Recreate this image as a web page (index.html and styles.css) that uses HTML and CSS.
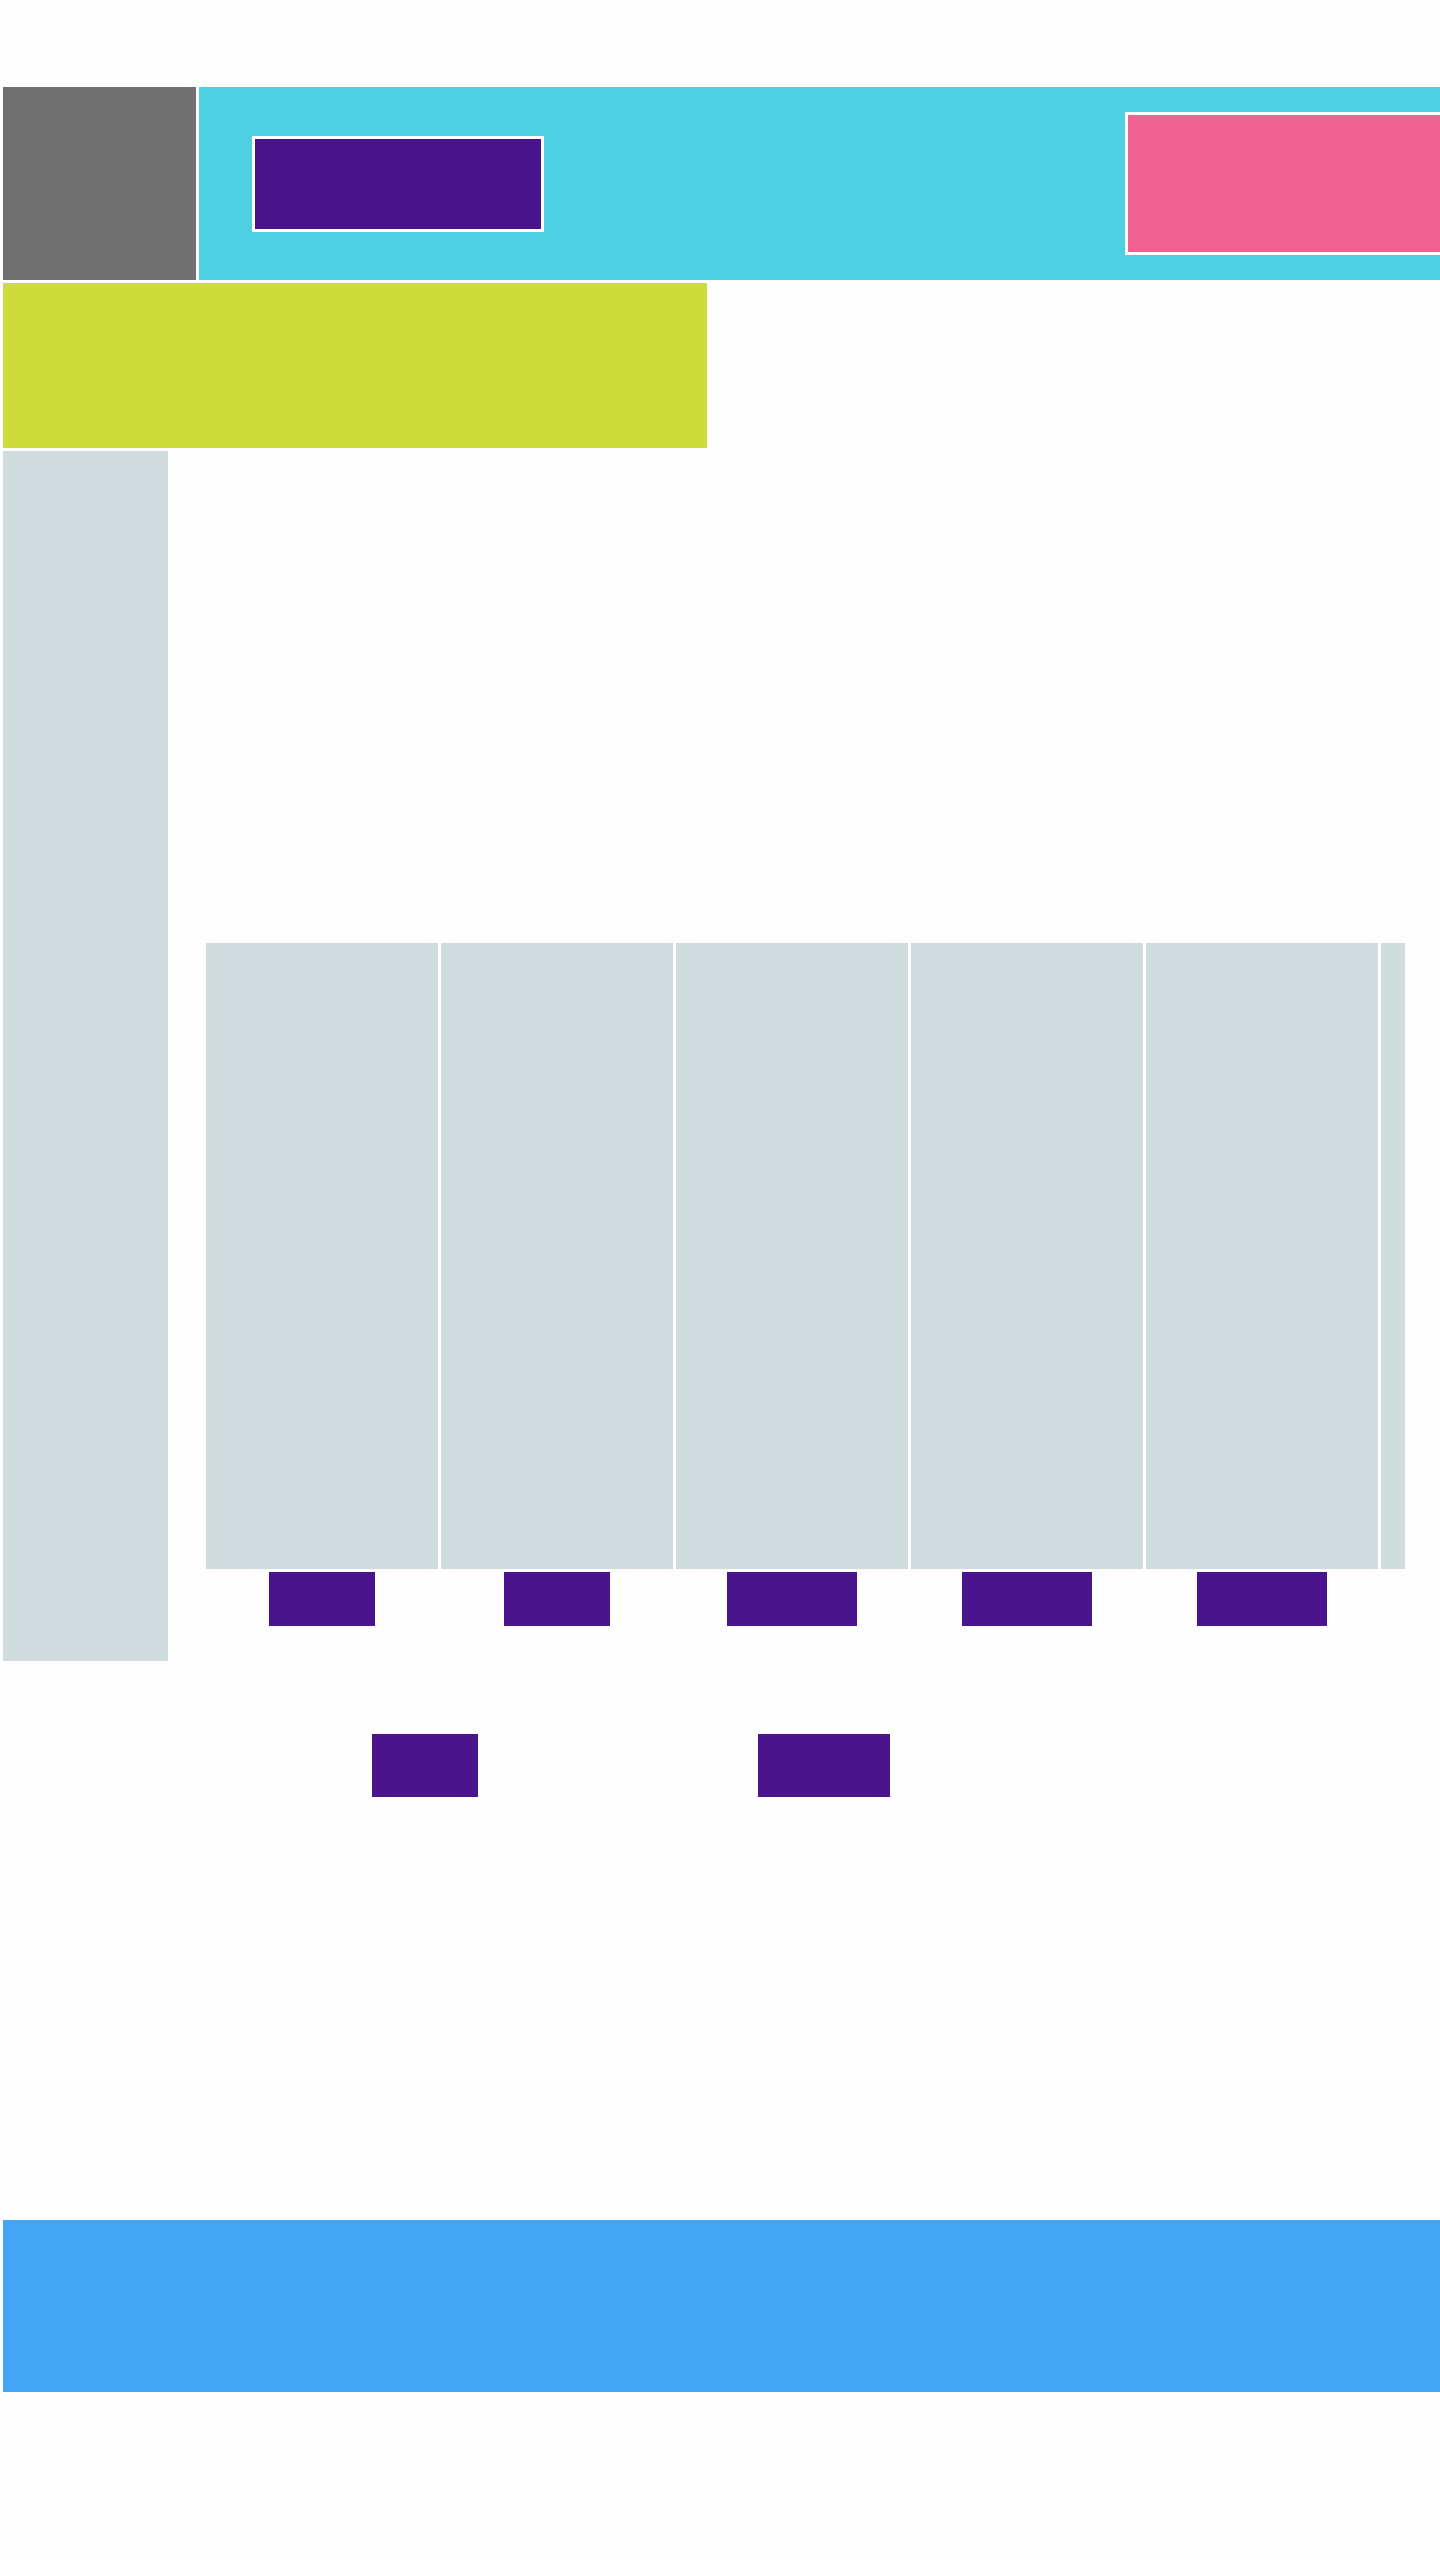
FILE: index.html
```html
<!DOCTYPE html>
<html lang="en">
<head>
  <meta charset="UTF-8">
  <meta name="viewport" content="width=device-width, initial-scale=1.0">
  <title>Layout</title>
  <link rel="stylesheet" href="styles.css">
</head>
<body>

<div id="page">
  <div class="header">
    <div class="logo-box"></div>
    <div class="topbar">
      <button class="top-btn"></button>
      <div class="promo"></div>
    </div>
  </div>

  <div class="banner"></div>

  <div class="main">
    <div class="sidebar"></div>
    <div class="content">
      <div class="strip">
        <div class="col"><div class="card"></div><button class="btn btn-sm"></button></div>
        <div class="col"><div class="card"></div><button class="btn btn-sm"></button></div>
        <div class="col"><div class="card"></div><button class="btn btn-lg"></button></div>
        <div class="col"><div class="card"></div><button class="btn btn-lg"></button></div>
        <div class="col"><div class="card"></div><button class="btn btn-lg"></button></div>
        <div class="col"><div class="card"></div><button class="btn btn-lg"></button></div>
      </div>
    </div>
  </div>

  <div class="actions">
    <button class="btn act-a"></button>
    <button class="btn act-b"></button>
  </div>

  <div class="footer"></div>
</div>

</body>
</html>
```

FILE: styles.css
```css
body {
  margin: 0;
  background-color: #fefefe;
  font-family: Arial, sans-serif;
}

#page {
  padding: 87px 0 0 3px;
  min-height: 2473px;
}

button {
  border: none;
  padding: 0;
  cursor: pointer;
}

.header {
  display: flex;
  height: 193px;
}

.logo-box {
  width: 193px;
  background-color: #707070;
}

.topbar {
  flex: 1;
  display: flex;
  align-items: center;
  margin-left: 3px;
  background-color: #4dd0e1;
  overflow: hidden;
}

.top-btn {
  width: 292px;
  height: 96px;
  margin-left: 53px;
  border: 3px solid #fff;
  background-color: #4a148c;
  box-sizing: border-box;
}

.promo {
  width: 315px;
  height: 143px;
  margin-left: auto;
  border: 3px solid #fff;
  border-right: none;
  background-color: #f06292;
  box-sizing: border-box;
}

.banner {
  width: 704px;
  height: 165px;
  margin-top: 3px;
  background-color: #cddc39;
}

.main {
  display: flex;
  margin-top: 3px;
}

.sidebar {
  width: 165px;
  height: 1210px;
  background-color: #cfdbdc;
}

.content {
  padding: 492px 0 0 38px;
}

.strip {
  display: flex;
  gap: 3px;
  width: 1199px;
  overflow: hidden;
}

.col {
  display: flex;
  flex-direction: column;
  align-items: center;
  gap: 3px;
  flex-shrink: 0;
}

.card {
  width: 232px;
  height: 626px;
  background-color: #cfdbdc;
}

.btn {
  height: 54px;
  background-color: #4a148c;
}

.btn-sm {
  width: 106px;
}

.btn-lg {
  width: 130px;
}

.actions {
  display: flex;
  margin-top: 73px;
  padding-left: 369px;
}

.act-a {
  width: 106px;
  height: 63px;
}

.act-b {
  width: 132px;
  height: 63px;
  margin-left: 280px;
}

.footer {
  height: 172px;
  margin-top: 423px;
  background-color: #42a5f5;
}
```
